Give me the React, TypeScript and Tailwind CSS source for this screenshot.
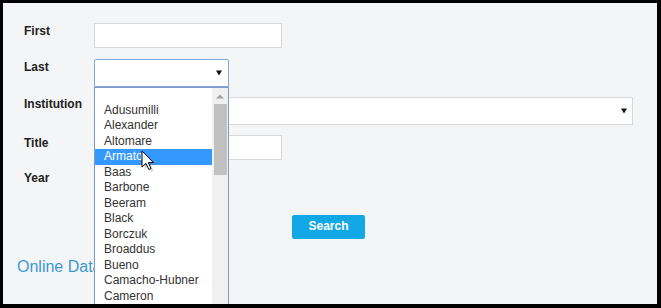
import React from "react";

const names = [
  "",
  "Adusumilli",
  "Alexander",
  "Altomare",
  "Armato",
  "Baas",
  "Barbone",
  "Beeram",
  "Black",
  "Borczuk",
  "Broaddus",
  "Bueno",
  "Camacho-Hubner",
  "Cameron",
];

function Arrow({ className }: { className?: string }) {
  return (
    <svg width="6" height="6" viewBox="0 0 6 6" className={className}>
      <polygon points="0,0.5 6,0.5 3,5.5" fill="#111" />
    </svg>
  );
}

export default function App() {
  const font = { fontFamily: '"Liberation Sans", Arial, sans-serif' };
  return (
    <div className="w-[661px] h-[308px] bg-black pt-[3px] pl-[3px] pr-[4px] pb-[4px]" style={font}>
      <div className="relative w-full h-full bg-[#f4f5f6] overflow-hidden">
        <div className="flex flex-col pt-[20px] pl-[21px]">
          {/* First */}
          <div className="flex items-start h-[25px]">
            <div className="w-[70px] text-[12px] leading-[16px] font-bold text-[#222] mt-[0px]">First</div>
            <div className="w-[188px] h-[25px] bg-white border border-[#d9d9d9]" />
          </div>
          {/* Last */}
          <div className="flex items-start h-[28px] mt-[11px]">
            <div className="w-[70px] text-[12px] leading-[16px] font-bold text-[#222] mt-[0px]">Last</div>
            <div className="w-[135px] h-[28px] bg-white border border-[#7ea6dc] rounded-t-[2px] flex items-center justify-end pr-[6px]">
              <Arrow />
            </div>
          </div>
          {/* Institution */}
          <div className="flex items-start h-[27px] mt-[10px]">
            <div className="w-[70px] text-[12px] leading-[16px] font-bold text-[#222] -mt-[1px]">Institution</div>
            <div className="w-[539px] h-[28px] bg-white border border-[#d9d9d9] flex items-center justify-end pr-[5px]">
              <Arrow />
            </div>
          </div>
          {/* Title */}
          <div className="flex items-start h-[25px] mt-[11px]">
            <div className="w-[70px] text-[12px] leading-[16px] font-bold text-[#222] mt-[0px]">Title</div>
            <div className="w-[188px] h-[25px] bg-white border border-[#d9d9d9]" />
          </div>
          {/* Year */}
          <div className="flex items-start h-[25px] mt-[10px]">
            <div className="w-[70px] text-[12px] leading-[16px] font-bold text-[#222] mt-[0px]">Year</div>
            <div className="w-[100px] h-[25px] bg-white border border-[#d9d9d9]" />
          </div>
          {/* Search */}
          <div className="mt-[18px] ml-[268px]">
            <button className="w-[73px] h-[24px] bg-[#12a8e6] rounded-[2px] text-white text-[12px] font-bold leading-[23px] text-center">
              Search
            </button>
          </div>
          {/* Online Data */}
          <div className="mt-[19px] -ml-[7px] text-[16px] leading-[18px] text-[#3b99d4]">Online Data</div>
        </div>

        {/* Dropdown list */}
        <div className="absolute left-[91px] top-[84px] w-[135px] h-[240px] bg-white border border-[#7e9ac4] flex">
          <div className="flex-1 flex flex-col -mt-[1px]">
            {names.map((n, i) => (
              <div
                key={i}
                className={
                  "h-[15.5px] leading-[15.5px] text-[12px] pl-[9px] whitespace-nowrap " +
                  (n === "Armato" ? "bg-[#3399ff] text-white" : "text-[#333]")
                }
              >
                {n}
              </div>
            ))}
          </div>
          <div className="w-[16px] bg-[#f0f0f0] flex flex-col items-center">
            <svg width="8" height="5" viewBox="0 0 8 5" className="mt-[6px]">
              <polygon points="0,4.5 8,4.5 4,0.5" fill="#a3a3a3" />
            </svg>
            <div className="mt-[5px] w-[13px] h-[71px] bg-[#c1c1c1]" />
          </div>
        </div>

        {/* Mouse cursor */}
        <svg
          className="absolute left-[138px] top-[147px]"
          width="16"
          height="24"
          viewBox="0 0 16 24"
        >
          <path d="M2,2 L2,18 L6,14.5 L8.8,20.5 L11,19.5 L8.3,13.6 L13.5,13.6 Z" fill="#888" opacity="0.35" transform="translate(1.5,1.5)" />
          <path d="M1,1 L1,17 L5,13.5 L7.8,19.5 L10,18.5 L7.3,12.6 L12.5,12.6 Z" fill="#fff" stroke="#000" strokeWidth="1" strokeLinejoin="round" />
        </svg>
      </div>
    </div>
  );
}
